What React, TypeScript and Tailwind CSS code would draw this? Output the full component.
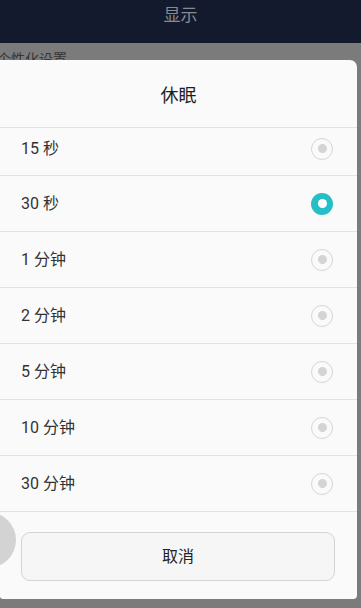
import React, { useState } from 'react';

const options = ['15 秒', '30 秒', '1 分钟', '2 分钟', '5 分钟', '10 分钟', '30 分钟'];

const Radio = ({ checked }: { checked: boolean }) =>
  checked ? (
    <span className="w-[22px] h-[22px] rounded-full bg-[#26bfc5] flex items-center justify-center">
      <span className="w-[9px] h-[9px] rounded-full bg-white" />
    </span>
  ) : (
    <span className="w-[22px] h-[22px] rounded-full border border-[#d6d6d6] flex items-center justify-center">
      <span className="w-[9px] h-[9px] rounded-full bg-[#d4d4d4]" />
    </span>
  );

export default function App() {
  const [selected, setSelected] = useState(1);

  return (
    <div
      className="relative w-[361px] h-[608px] overflow-hidden bg-[#7b7b7b]"
      style={{ fontFamily: 'Roboto, "Noto Sans CJK SC", sans-serif' }}
    >
      {/* dimmed page behind */}
      <div className="h-[43px] bg-[#131a2d] flex items-center justify-center">
        <span className="text-[17px] text-[#858a95] -mt-[12px]">显示</span>
      </div>
      <div className="pt-[9px] text-[14px] text-[#353535] -ml-[3px] leading-none">个性化设置</div>

      {/* dialog */}
      <div className="absolute left-0 top-[60px] w-[357px] h-[539px] bg-[#fafafa] rounded-tr-[7px] rounded-br-[4px] rounded-bl-[3px] flex flex-col">
        <div className="h-[68px] shrink-0 flex items-center justify-center border-b border-[#e2e2e2]">
          <span className="text-[18px] text-[#1e1e1e] mt-[3px]">休眠</span>
        </div>
        {options.map((o, i) => (
          <button
            key={o}
            onClick={() => setSelected(i)}
            className={`shrink-0 flex items-center justify-between pl-[21px] pr-[24px] border-b border-[#e2e2e2] text-left ${
              i === 0 ? 'h-[48px]' : 'h-[56px]'
            }`}
          >
            <span className={`text-[16px] text-[#333] ${i === 0 ? '-mt-[6px]' : ''}`}>{o}</span>
            <span className={i === 0 ? '-mt-[6px]' : ''}>
              <Radio checked={selected === i} />
            </span>
          </button>
        ))}
        <div className="px-[21px] pt-[20px]">
          <button className="w-[314px] h-[49px] rounded-[9px] border border-[#d4d4d4] bg-[#f6f6f6] text-[16px] text-[#222] flex items-center justify-center">
            取消
          </button>
        </div>
      </div>

      {/* floating ball */}
      <div className="absolute left-[-40px] top-[512px] w-[56px] h-[56px] rounded-full bg-[#d3d3d3]" />
    </div>
  );
}
